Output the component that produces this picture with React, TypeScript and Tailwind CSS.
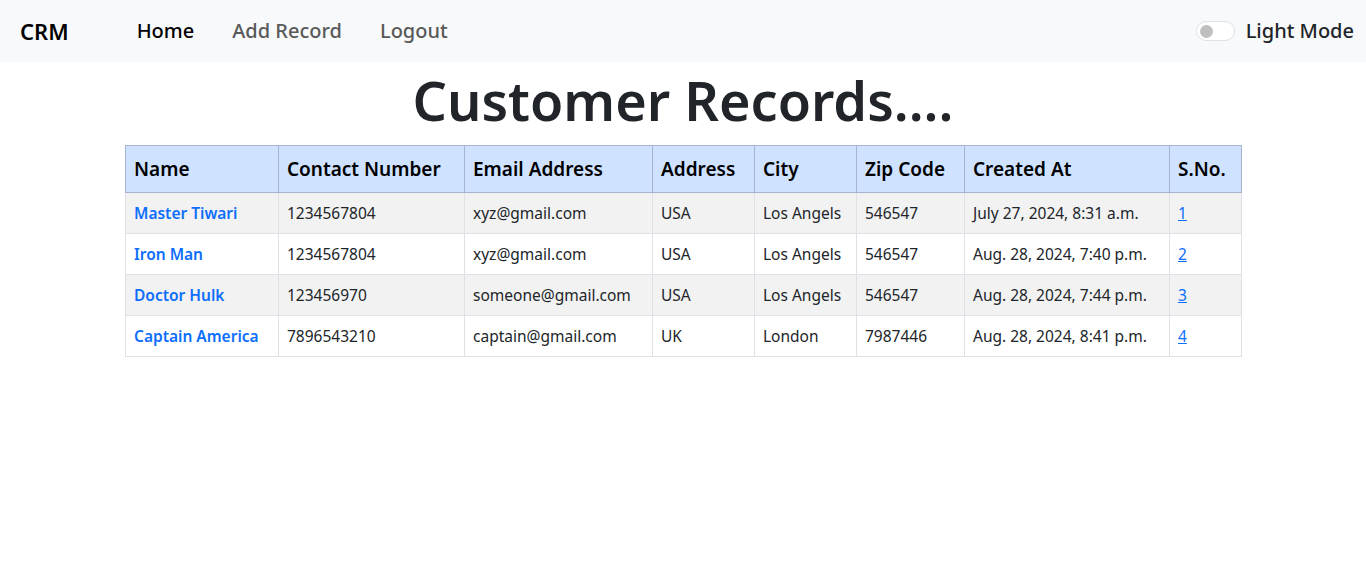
import React from "react";

const rows = [
  { name: "Master Tiwari", phone: "1234567804", email: "xyz@gmail.com", address: "USA", city: "Los Angels", zip: "546547", created: "July 27, 2024, 8:31 a.m.", id: 1 },
  { name: "Iron Man", phone: "1234567804", email: "xyz@gmail.com", address: "USA", city: "Los Angels", zip: "546547", created: "Aug. 28, 2024, 7:40 p.m.", id: 2 },
  { name: "Doctor Hulk", phone: "123456970", email: "someone@gmail.com", address: "USA", city: "Los Angels", zip: "546547", created: "Aug. 28, 2024, 7:44 p.m.", id: 3 },
  { name: "Captain America", phone: "7896543210", email: "captain@gmail.com", address: "UK", city: "London", zip: "7987446", created: "Aug. 28, 2024, 8:41 p.m.", id: 4 },
];

const headers = ["Name", "Contact Number", "Email Address", "Address", "City", "Zip Code", "Created At", "S.No."];
const widths = ["w-[153px]", "w-[186px]", "w-[188px]", "w-[102px]", "w-[102px]", "w-[108px]", "w-[205px]", "w-[72px]"];

export default function App() {
  return (
    <div className="min-h-screen bg-white text-[#212529] font-['Noto_Sans',sans-serif]">
      <nav className="h-[62px] bg-[#f8f9fa] flex items-center pl-5 pr-3">
        <a className="text-[22px] font-semibold text-black mr-[68px]">CRM</a>
        <div className="flex items-center gap-[38px] text-[20px] font-medium">
          <a className="text-black">Home</a>
          <a className="text-[#595959]">Add Record</a>
          <a className="text-[#595959]">Logout</a>
        </div>
        <div className="ml-auto flex items-center gap-[11px]">
          <span className="w-[39px] h-[20px] rounded-full border border-[#dee2e6] bg-white flex items-center pl-[3px]">
            <span className="w-[13px] h-[13px] rounded-full bg-[#bfbfbf]" />
          </span>
          <span className="text-[20px] font-medium text-[#212529]">Light Mode</span>
        </div>
      </nav>
      <h1 className="text-center text-[54px] leading-[77px] font-semibold mb-[6px]">Customer Records....</h1>
      <div className="px-[125px]">
        <table className="w-full table-fixed border-collapse">
          <thead>
            <tr className="bg-[#cfe2ff]">
              {headers.map((h, i) => (
                <th key={h} className={`${widths[i]} border border-[#a6b5cc] px-2 py-2 text-left text-[19px] leading-[30px] font-semibold text-black`}>
                  {h}
                </th>
              ))}
            </tr>
          </thead>
          <tbody className="text-[15.5px] leading-6">
            {rows.map((r, i) => (
              <tr key={r.id} className={i % 2 === 0 ? "bg-[#f2f2f2]" : "bg-white"}>
                <td className="border border-[#dee2e6] p-2">
                  <a className="text-[#0d6efd] font-semibold">{r.name}</a>
                </td>
                <td className="border border-[#dee2e6] p-2">{r.phone}</td>
                <td className="border border-[#dee2e6] p-2">{r.email}</td>
                <td className="border border-[#dee2e6] p-2">{r.address}</td>
                <td className="border border-[#dee2e6] p-2">{r.city}</td>
                <td className="border border-[#dee2e6] p-2">{r.zip}</td>
                <td className="border border-[#dee2e6] p-2">{r.created}</td>
                <td className="border border-[#dee2e6] p-2">
                  <a className="text-[#0d6efd] underline">{r.id}</a>
                </td>
              </tr>
            ))}
          </tbody>
        </table>
      </div>
    </div>
  );
}
